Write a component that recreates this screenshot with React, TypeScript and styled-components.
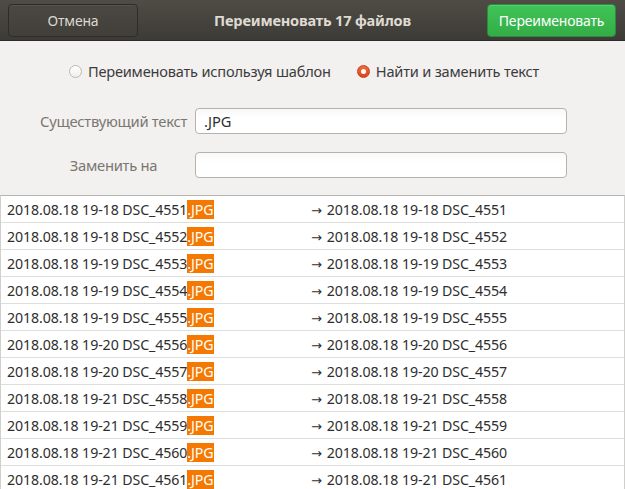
import styled, { createGlobalStyle } from 'styled-components';

const GlobalStyle = createGlobalStyle`
  html, body {
    margin: 0;
    padding: 0;
    background: #f2f1f0;
    overflow: hidden;
  }
  body {
    font-family: "Noto Sans", "Open Sans", sans-serif;
  }
`;

const Dialog = styled.div`
  width: 625px;
  height: 489px;
  display: flex;
  flex-direction: column;
  background: #f2f1f0;
  overflow: hidden;
`;

const HeaderBar = styled.div`
  height: 41px;
  flex: none;
  box-sizing: border-box;
  display: grid;
  grid-template-columns: 130px 1fr 129px;
  align-items: center;
  padding: 0 9px 0 8px;
  background: linear-gradient(#4f4c46, #3d3b37);
  border-bottom: 1px solid #2c2b28;
`;

const HeaderButton = styled.button<{ $suggested?: boolean }>`
  height: 33px;
  box-sizing: border-box;
  border-radius: 4px;
  font-family: "Noto Sans", sans-serif;
  font-size: 14px;
  padding: 0;
  color: ${(p) => (p.$suggested ? '#ffffff' : '#dcd9d1')};
  border: 1px solid ${(p) => (p.$suggested ? '#2b8d3a' : '#2d2c28')};
  background: ${(p) =>
    p.$suggested
      ? 'linear-gradient(#40c456, #33ad47)'
      : 'linear-gradient(#4a4842, #423f3a)'};
  box-shadow: inset 0 1px 0 rgba(255, 255, 255, ${(p) => (p.$suggested ? 0.15 : 0.06)});
  letter-spacing: -0.2px;
`;

const Title = styled.div`
  text-align: center;
  color: #dfdbd2;
  font-weight: bold;
  font-size: 14.6px;
  letter-spacing: -0.2px;
`;

const RadioRow = styled.div`
  display: flex;
  justify-content: center;
  gap: 26px;
  padding: 20px 17px 0 0;
  height: 22px;
  align-items: center;
`;

const RadioOption = styled.label`
  display: flex;
  align-items: center;
  gap: 6px;
  font-size: 14.6px;
  color: #3c3c3c;
  letter-spacing: -0.2px;
`;

const RadioDot = styled.span<{ $checked?: boolean }>`
  width: 13px;
  height: 13px;
  box-sizing: border-box;
  border-radius: 50%;
  display: flex;
  align-items: center;
  justify-content: center;
  border: 1px solid ${(p) => (p.$checked ? '#c4441a' : '#bcb9b4')};
  background: ${(p) =>
    p.$checked ? 'linear-gradient(#f26b3a, #d9461b)' : 'linear-gradient(#ffffff, #f0efee)'};

  &::after {
    content: '';
    width: 5px;
    height: 5px;
    border-radius: 50%;
    background: #ffffff;
    display: ${(p) => (p.$checked ? 'block' : 'none')};
  }
`;

const Form = styled.div`
  display: grid;
  grid-template-columns: 147px 372px;
  column-gap: 8px;
  row-gap: 18px;
  padding: 27px 0 0 40px;
  align-items: center;
`;

const FieldLabel = styled.span<{ $center?: boolean }>`
  font-size: 14.8px;
  color: #7a7770;
  text-align: ${(p) => (p.$center ? 'center' : 'right')};
  letter-spacing: -0.3px;
  white-space: nowrap;
`;

const TextInput = styled.div`
  height: 26px;
  box-sizing: border-box;
  border: 1px solid #b6b3ad;
  border-radius: 4px;
  background: linear-gradient(#f8f8f8, #ffffff 40%);
  display: flex;
  align-items: center;
  padding: 0 8px;
  font-size: 14.6px;
  color: #2e2e2e;
`;

const FileList = styled.div`
  margin-top: 17px;
  flex: 1;
  background: #ffffff;
  border-top: 1px solid #b6b4b0;
  border-left: 1px solid #d0cfcc;
  border-right: 1px solid #d0cfcc;
`;

const FileRow = styled.div`
  height: 26px;
  display: grid;
  grid-template-columns: 304px 1fr;
  align-items: center;
  padding-left: 6px;
  border-bottom: 1px solid #dededc;
  font-size: 14.2px;
  color: #2e2e2e;
  letter-spacing: -0.1px;
  white-space: nowrap;
`;

const Match = styled.span`
  background: #f57900;
  color: #ffffff;
`;

const Arrow = styled.span`
  font-family: "DejaVu Sans", sans-serif;
  font-size: 13px;
  margin-right: 5px;
`;

const files = [
  ['19-18', '4551'],
  ['19-18', '4552'],
  ['19-19', '4553'],
  ['19-19', '4554'],
  ['19-19', '4555'],
  ['19-20', '4556'],
  ['19-20', '4557'],
  ['19-21', '4558'],
  ['19-21', '4559'],
  ['19-21', '4560'],
  ['19-21', '4561'],
];

export default function App() {
  return (
    <>
      <GlobalStyle />
      <Dialog>
        <HeaderBar>
          <HeaderButton>Отмена</HeaderButton>
          <Title>Переименовать 17 файлов</Title>
          <HeaderButton $suggested>Переименовать</HeaderButton>
        </HeaderBar>
        <RadioRow>
          <RadioOption>
            <RadioDot />
            Переименовать используя шаблон
          </RadioOption>
          <RadioOption>
            <RadioDot $checked />
            Найти и заменить текст
          </RadioOption>
        </RadioRow>
        <Form>
          <FieldLabel>Существующий текст</FieldLabel>
          <TextInput>.JPG</TextInput>
          <FieldLabel $center>Заменить на</FieldLabel>
          <TextInput />
        </Form>
        <FileList>
          {files.map(([time, num]) => {
            const base = `2018.08.18 ${time} DSC_${num}`;
            return (
              <FileRow key={num}>
                <span>
                  {base}
                  <Match>.JPG</Match>
                </span>
                <span>
                  <Arrow>→</Arrow>
                  {base}
                </span>
              </FileRow>
            );
          })}
        </FileList>
      </Dialog>
    </>
  );
}
